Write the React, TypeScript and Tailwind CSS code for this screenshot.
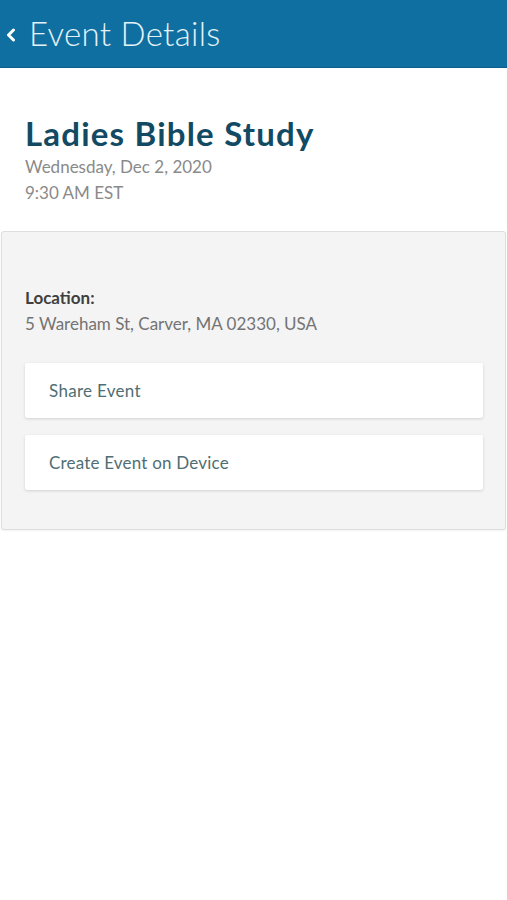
import React from 'react';

const font = { fontFamily: 'Lato, "Open Sans", sans-serif' };

export default function App() {
  return (
    <div className="min-h-[900px] w-[507px] bg-white" style={font}>
      <header className="flex h-[68px] items-center gap-[12px] border-b border-[#0b5f8a] bg-[#0f6fa0] pl-[5px]">
        <svg width="12" height="14" viewBox="0 0 12 14" className="mt-[2px]">
          <path d="M8.5 2 L3.5 7 L8.5 12" fill="none" stroke="#ffffff" strokeWidth="3" strokeLinecap="round" strokeLinejoin="round" />
        </svg>
        <h1 className="text-[33px] font-light leading-none tracking-[0.3px] text-[#e4f2f8]">Event Details</h1>
      </header>

      <section className="px-[25px] pt-[46px] pb-[25px]">
        <h2 className="text-[33px] font-bold leading-[38px] tracking-[1.2px] text-[#134a63]">Ladies Bible Study</h2>
        <p className="mt-[2px] text-[17px] leading-[26px] text-[#8a8a8a]">Wednesday, Dec 2, 2020</p>
        <p className="text-[17px] leading-[26px] text-[#8a8a8a]">9:30 AM EST</p>
      </section>

      <section className="mx-[1px] rounded-[3px] border border-[#dedede] bg-[#f4f4f4] pl-[23px] pr-[22px] pt-[53px] pb-[39px] shadow-[0_1px_2px_rgba(0,0,0,0.06)]">
        <p className="text-[17px] font-bold leading-[26px] text-[#3f3f3f]">Location:</p>
        <p className="text-[17px] leading-[26px] text-[#737373]">5 Wareham St, Carver, MA 02330, USA</p>
        <div className="mt-[26px] flex flex-col gap-[17px]">
          <button className="flex h-[55px] items-center rounded-[2px] bg-white pl-[24px] text-left text-[17px] tracking-[0.3px] text-[#4f6e73] shadow-[0_1px_3px_rgba(0,0,0,0.15)]">
            Share Event
          </button>
          <button className="flex h-[55px] items-center rounded-[2px] bg-white pl-[24px] text-left text-[17px] tracking-[0.2px] text-[#4f6e73] shadow-[0_1px_3px_rgba(0,0,0,0.15)]">
            Create Event on Device
          </button>
        </div>
      </section>
    </div>
  );
}
